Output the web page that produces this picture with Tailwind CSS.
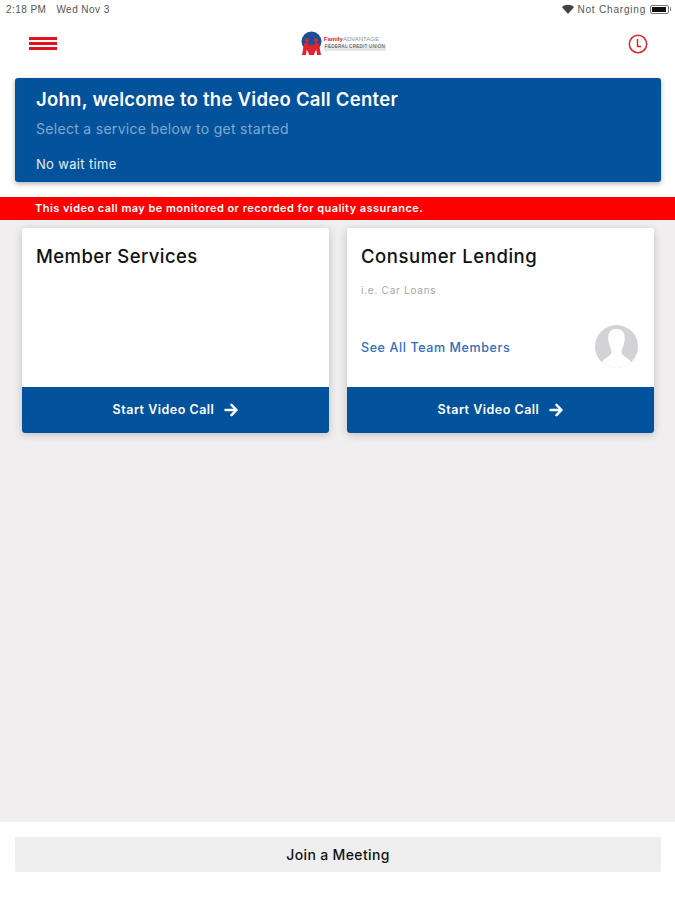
<!DOCTYPE html>
<html lang="en">
<head>
  <meta charset="UTF-8" />
  <meta name="viewport" content="width=device-width, initial-scale=1.0" />
  <title>Video Call Center</title>
  <script src="https://cdn.jsdelivr.net/npm/@tailwindcss/browser@4"></script>
</head>
<body class="bg-white font-['Inter',sans-serif] w-[675px] h-[900px] overflow-hidden flex flex-col">

  <!-- Status bar -->
  <div class="h-[18px] flex items-center justify-between pl-[6px] pr-[4px] text-[10px] text-[#555] font-['Liberation_Sans',sans-serif]">
    <div class="flex gap-[10px] tracking-[0.45px]"><span>2:18 PM</span><span>Wed Nov 3</span></div>
    <div class="flex items-center gap-[3px]">
      <svg width="12" height="10" viewBox="0 0 12 10"><path d="M0 3.2 C3 0 9 0 12 3.2 L6 10 Z" fill="#444"/></svg>
      <span class="tracking-[0.8px]">Not Charging</span>
      <div class="w-[19px] h-[9px] border border-[#777] rounded-[2px] p-px ml-px"><div class="h-full w-[14px] bg-[#111]"></div></div>
      <div class="w-px h-[4px] bg-[#888] -ml-[2px]"></div>
    </div>
  </div>

  <!-- Header -->
  <div class="h-[50px] flex items-center justify-between pl-[29px] pr-[27px]">
    <div class="w-[28px] flex flex-col gap-[2px]">
      <div class="h-[3px] bg-[#e3111b]"></div>
      <div class="h-[3px] bg-[#e3111b]"></div>
      <div class="h-[3px] bg-[#e3111b]"></div>
    </div>
    <div class="flex items-center gap-[2px] ml-[2px]">
      <svg width="21" height="25" viewBox="0 0 21 25">
        <circle cx="10.500" cy="10.500" r="10" fill="#1c4f96"/>
        <path d="M1 24 L3 13 L6 11 L9 15 L10.500 13 L12 15 L15 11 L18 13 L20 24 L16 24 L15 17 L13 24 L8 24 L6 17 L5 24 Z" fill="#e0262c"/>
        <circle cx="6" cy="9" r="2" fill="#e0262c"/>
        <circle cx="15" cy="9" r="2" fill="#e0262c"/>
      </svg>
      <div class="flex flex-col leading-none font-['Liberation_Sans',sans-serif]">
        <div class="text-[6px] h-[8px] whitespace-nowrap"><span class="font-bold text-[#d8232a]">Family</span><span class="text-[#8a93a8]">ADVANTAGE</span></div>
        <div class="text-[4.500px] h-[6px] mt-px px-px bg-[#e6e6e6] text-[#444] tracking-[0.3px] whitespace-nowrap">FEDERAL CREDIT UNION</div>
      </div>
    </div>
    <svg class="mt-[2px]" width="20" height="20" viewBox="0 0 20 20" fill="none" stroke="#e2222a" stroke-width="1.500">
      <circle cx="10" cy="10" r="8.700"/>
      <path d="M9.500 5 V12.500 H13"/>
    </svg>
  </div>

  <!-- Welcome banner -->
  <div class="pl-[15px] pr-[14px] pt-[10px] pb-[15px]">
    <div class="h-[104px] bg-[#02529c] rounded-[3px] shadow-[0_2px_5px_rgba(0,0,0,0.3)] pl-[21px] pt-[9px] text-white">
      <h1 class="text-[18.500px] leading-[24px] font-semibold tracking-[0.27px]">John, welcome to the Video Call Center</h1>
      <p class="mt-[9px] text-[14px] leading-[18px] text-white/50 tracking-[0.3px]">Select a service below to get started</p>
      <p class="mt-[17px] text-[13px] leading-[18px] text-white/90 tracking-[0.33px]">No wait time</p>
    </div>
  </div>

  <!-- Main -->
  <div class="flex-1 bg-[#f0eeee] flex flex-col">
    <div class="h-[23px] bg-[#fe0000] pl-[35px] flex items-center text-white text-[11px] font-semibold tracking-[0.45px]">This video call may be monitored or recorded for quality assurance.</div>

    <div class="grid grid-cols-2 gap-[18px] pl-[22px] pr-[21px] pt-[8px]">
      <div class="h-[205px] bg-white rounded-[3px] shadow-[0_2px_8px_rgba(0,0,0,0.2)] flex flex-col">
        <div class="flex-1 pl-[14px] pt-[16px]">
          <h2 class="text-[18.500px] leading-[24px] font-medium text-[#111] tracking-[0.4px]">Member Services</h2>
        </div>
        <button class="h-[46px] bg-[#02529c] rounded-b-[3px] flex items-center justify-center gap-[10px] text-white text-[12.500px] font-semibold tracking-[0.5px]">
          Start Video Call
          <svg width="14" height="14" viewBox="0 0 14 14" fill="none" stroke="white" stroke-width="2.500" stroke-linecap="round" stroke-linejoin="round"><path d="M1.500 7 H12.500 M7.500 1.800 L12.500 7 L7.500 12.200"/></svg>
        </button>
      </div>

      <div class="h-[205px] bg-white rounded-[3px] shadow-[0_2px_8px_rgba(0,0,0,0.2)] flex flex-col">
        <div class="flex-1 pl-[14px] pr-[16px] pt-[16px] flex flex-col">
          <h2 class="text-[18.500px] leading-[24px] font-medium text-[#111] tracking-[0.55px]">Consumer Lending</h2>
          <p class="mt-[15px] text-[10px] leading-[14px] text-[#a5a5a5] tracking-[0.75px]">i.e. Car Loans</p>
          <div class="mt-[28px] flex items-center justify-between">
            <a class="mt-[3px] text-[12.500px] font-medium text-[#2f6dbd] tracking-[0.6px]">See All Team Members</a>
            <svg class="w-[43px] h-[43px]" viewBox="0 0 43 43">
              <defs><clipPath id="avatar"><circle cx="21.500" cy="21.500" r="21.500"/></clipPath></defs>
              <g clip-path="url(#avatar)">
                <rect width="43" height="43" fill="#d2d3d6"/>
                <path d="M21.500 4 C14 4 12.500 10 13.500 16 C14.200 21 16.500 24 16.500 27 C16.500 31 9 33 7 37 L7 43 H36 L36 37 C34 33 26.500 31 26.500 27 C26.500 24 28.800 21 29.500 16 C30.500 10 29 4 21.500 4 Z" fill="#fff"/>
              </g>
            </svg>
          </div>
        </div>
        <button class="h-[46px] bg-[#02529c] rounded-b-[3px] flex items-center justify-center gap-[10px] text-white text-[12.500px] font-semibold tracking-[0.5px]">
          Start Video Call
          <svg width="14" height="14" viewBox="0 0 14 14" fill="none" stroke="white" stroke-width="2.500" stroke-linecap="round" stroke-linejoin="round"><path d="M1.500 7 H12.500 M7.500 1.800 L12.500 7 L7.500 12.200"/></svg>
        </button>
      </div>
    </div>
  </div>

  <!-- Join -->
  <div class="h-[78px] bg-white pl-[15px] pr-[14px] pt-[15px]">
    <button class="w-full h-[35px] bg-[#eeeeee] rounded-[2px] text-[14px] font-medium text-[#111] tracking-[0.35px]">Join a Meeting</button>
  </div>

</body>
</html>
